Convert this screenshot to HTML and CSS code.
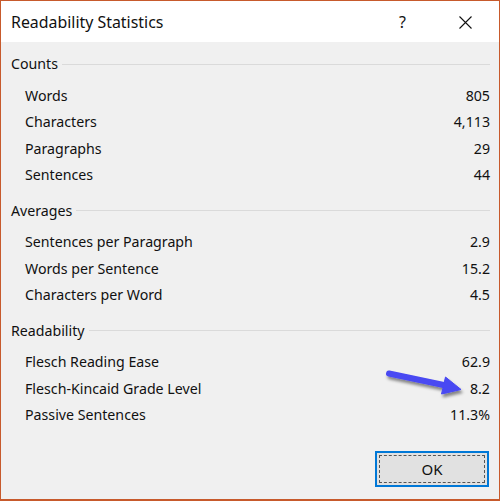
FILE: index.html
```html
<!DOCTYPE html>
<html>
<head>
<meta charset="utf-8">
<link rel="stylesheet" href="styles.css">
</head>
<body>
<div class="window">
  <div class="titlebar">
    <span class="title">Readability Statistics</span>
    <span class="help">?</span>
    <span class="close">
      <svg width="13" height="13" viewBox="0 0 13 13"><path d="M0.5 0.5 L12.5 12.5 M12.5 0.5 L0.5 12.5" stroke="#111" stroke-width="1.1" fill="none"/></svg>
    </span>
  </div>
  <div class="content">
    <section class="group">
      <div class="group-head"><span>Counts</span><i class="rule"></i></div>
      <div class="row"><span>Words</span><span>805</span></div>
      <div class="row"><span>Characters</span><span>4,113</span></div>
      <div class="row"><span>Paragraphs</span><span>29</span></div>
      <div class="row"><span>Sentences</span><span>44</span></div>
    </section>
    <section class="group">
      <div class="group-head"><span>Averages</span><i class="rule"></i></div>
      <div class="row"><span>Sentences per Paragraph</span><span>2.9</span></div>
      <div class="row"><span>Words per Sentence</span><span>15.2</span></div>
      <div class="row"><span>Characters per Word</span><span>4.5</span></div>
    </section>
    <section class="group">
      <div class="group-head"><span>Readability</span><i class="rule"></i></div>
      <div class="row"><span>Flesch Reading Ease</span><span>62.9</span></div>
      <div class="row"><span>Flesch-Kincaid Grade Level</span><span>8.2</span></div>
      <div class="row"><span>Passive Sentences</span><span>11.3%</span></div>
    </section>
    <div class="footer">
      <button class="ok"><span class="focus">OK</span></button>
    </div>
  </div>
  <svg class="arrow" width="500" height="501" viewBox="0 0 500 501">
    <defs>
      <filter id="sh" x="-20%" y="-50%" width="140%" height="200%">
        <feDropShadow dx="1.5" dy="3" stdDeviation="1.6" flood-color="#000" flood-opacity="0.45"/>
      </filter>
    </defs>
    <g filter="url(#sh)" fill="#4848f2" stroke="#4848f2">
      <line x1="389" y1="373.5" x2="446" y2="385.5" stroke-width="6" stroke-linecap="round"/>
      <polygon points="461,389.5 441.5,394 445.5,377" stroke-width="1" stroke-linejoin="round"/>
    </g>
  </svg>
</div>
</body>
</html>
```
FILE: styles.css
```css
* { box-sizing: border-box; }
html, body { margin: 0; padding: 0; }
body {
  width: 500px;
  height: 501px;
  overflow: hidden;
  font-family: "Noto Sans", "Liberation Sans", sans-serif;
  color: #111;
}
.window {
  position: relative;
  width: 500px;
  height: 501px;
  border: 1px solid #c75a2c;
  border-bottom-width: 2px;
  background: #f0f0f0;
  display: flex;
  flex-direction: column;
}
.titlebar {
  height: 41px;
  background: #fff;
  display: flex;
  align-items: center;
  padding-left: 10px;
}
.title {
  font-size: 15.9px;
  flex: 1;
  padding-top: 1px;
}
.help {
  width: 60px;
  font-size: 16px;
  text-align: left;
}
.close {
  width: 40px;
  display: flex;
  padding-top: 1px;
}
.content {
  flex: 1;
  padding: 12px 9px 0 10px;
  font-size: 14.2px;
  display: flex;
  flex-direction: column;
}
.group {
  margin-bottom: 11.75px;
}
.group-head {
  height: 20px;
  line-height: 20px;
  display: flex;
  align-items: center;
  margin-bottom: 8.75px;
}
.rule {
  flex: 1;
  height: 1px;
  background: #dadada;
  margin-left: 4px;
}
.row {
  height: 26.5px;
  line-height: 26.5px;
  display: flex;
  justify-content: space-between;
  padding-left: 14px;
}
.footer {
  display: flex;
  justify-content: flex-end;
  padding-top: 10px;
  padding-right: 1px;
}
.ok {
  width: 114px;
  height: 36px;
  border: 2px solid #0078d7;
  background: #e1e1e1;
  padding: 2px;
  font-family: inherit;
  font-size: 15px;
  color: #111;
  display: flex;
}
.focus {
  flex: 1;
  border: 1px dashed #555;
  display: flex;
  align-items: center;
  justify-content: center;
}
.arrow {
  position: absolute;
  left: -1px;
  top: -1px;
  pointer-events: none;
}
```
